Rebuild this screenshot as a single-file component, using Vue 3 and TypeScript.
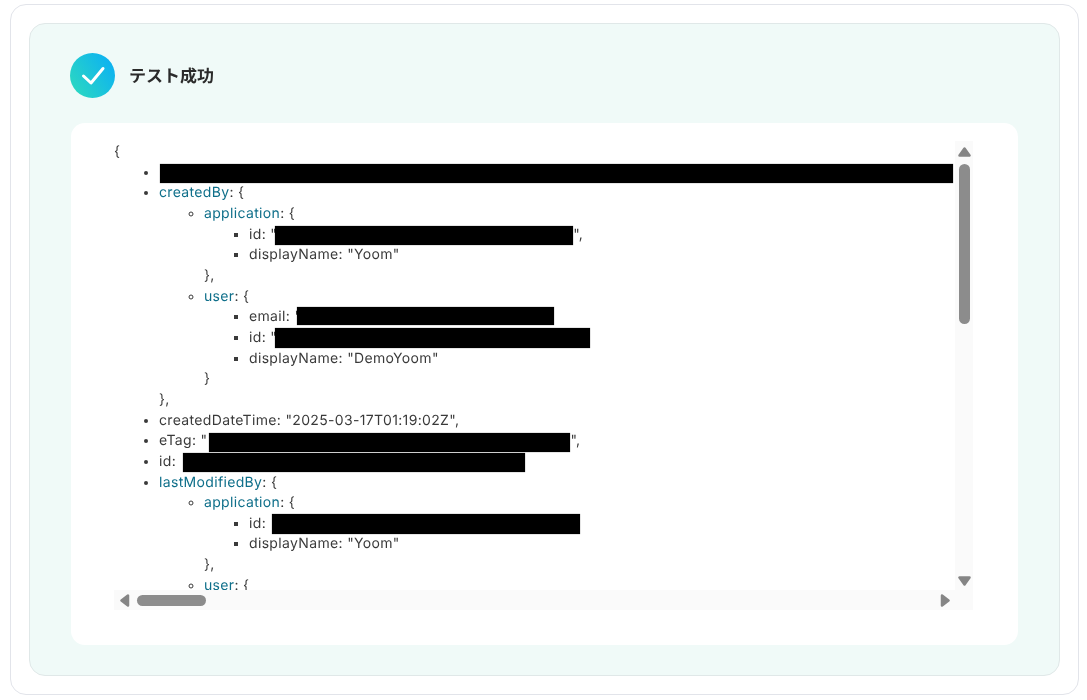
<script setup lang="ts">
const title = 'テスト成功'
</script>

<template>
  <div class="page">
    <section class="card">
      <div class="panel">
        <header class="head">
          <svg class="badge" viewBox="0 0 45 45" width="45" height="45" aria-hidden="true">
            <defs>
              <linearGradient id="g" x1="0" y1="1" x2="1" y2="0.35">
                <stop offset="0" stop-color="#2fdcbc" />
                <stop offset="1" stop-color="#0eb3f0" />
              </linearGradient>
            </defs>
            <circle cx="22.5" cy="22.5" r="22.5" fill="url(#g)" />
            <path d="M13.5 23 L21 30 L33 15.5" fill="none" stroke="#fff" stroke-width="3" stroke-linecap="round" stroke-linejoin="round" />
          </svg>
          <h2 class="title">{{ title }}</h2>
        </header>
        <div class="result">
          <div class="scroller">
            <div class="viewport">
              <div class="json">
                <div>{</div>
                <ul class="l1">
                  <li><span class="red w-top"></span></li>
                  <li><span class="key">createdBy</span>: {
                    <ul class="l2">
                      <li><span class="key">application</span>: {
                        <ul class="l3">
                          <li>id: "<span class="red w-a"></span>",</li>
                          <li>displayName: "Yoom"</li>
                        </ul>
                        },
                      </li>
                      <li><span class="key">user</span>: {
                        <ul class="l3">
                          <li>email: "<span class="red w-b"></span></li>
                          <li>id: "<span class="red w-c"></span></li>
                          <li>displayName: "DemoYoom"</li>
                        </ul>
                        }
                      </li>
                    </ul>
                    },
                  </li>
                  <li>createdDateTime: "2025-03-17T01:19:02Z",</li>
                  <li>eTag: "<span class="red w-d"></span>",</li>
                  <li>id: <span class="red w-e"></span></li>
                  <li><span class="key">lastModifiedBy</span>: {
                    <ul class="l2">
                      <li><span class="key">application</span>: {
                        <ul class="l3">
                          <li>id: <span class="red w-f"></span></li>
                          <li>displayName: "Yoom"</li>
                        </ul>
                        },
                      </li>
                      <li><span class="key">user</span>: {</li>
                    </ul>
                  </li>
                </ul>
              </div>
            </div>
            <div class="vbar">
              <svg class="arrow up" viewBox="0 0 13 10" width="13" height="10" aria-hidden="true"><path d="M6.5 1.5 L11.5 8.5 H1.5 Z" /></svg>
              <span class="vthumb"></span>
              <svg class="arrow down" viewBox="0 0 13 10" width="13" height="10" aria-hidden="true"><path d="M1.5 1.5 H11.5 L6.5 8.5 Z" /></svg>
            </div>
            <div class="hbar">
              <svg class="arrow left" viewBox="0 0 10 13" width="10" height="13" aria-hidden="true"><path d="M1.5 6.5 L8 1.5 V11.5 Z" /></svg>
              <span class="hthumb"></span>
              <svg class="arrow right" viewBox="0 0 10 13" width="10" height="13" aria-hidden="true"><path d="M2 1.5 L8.5 6.5 L2 11.5 Z" /></svg>
            </div>
          </div>
        </div>
      </div>
    </section>
  </div>
</template>

<style>
html, body { margin: 0; background: #fff; }
</style>

<style scoped>
.page {
  box-sizing: border-box;
  height: 700px;
  padding: 4px 8px 5px 10px;
  font-family: Inter, "Noto Sans CJK JP", sans-serif;
  text-rendering: geometricPrecision;
}
.card {
  box-sizing: border-box;
  height: 100%;
  padding: 18px;
  border: 1px solid #e2e4ea;
  border-radius: 16px;
  background: #fff;
}
.panel {
  box-sizing: border-box;
  height: 100%;
  padding: 29px 41px 30px 41px;
  display: flex;
  flex-direction: column;
  border: 1px solid #e0e8e8;
  border-radius: 16px;
  background: #f0faf8;
}
.head {
  display: flex;
  align-items: center;
  gap: 14px;
  height: 45px;
  margin-left: -1px;
  margin-bottom: 25px;
}
.badge { flex: none; }
.title {
  margin: -3px 0 0;
  font-size: 17px;
  font-weight: 600;
  color: #2b2b2b;
  font-family: "Noto Sans CJK JP", sans-serif;
  will-change: transform;
}
.result {
  flex: 1;
  min-height: 0;
  padding: 18px 45px 35px 43px;
  border-radius: 14px;
  background: #fff;
}
.scroller {
  display: grid;
  grid-template-columns: 1fr 18px;
  grid-template-rows: 1fr 20px;
  height: 100%;
}
.viewport {
  min-width: 0;
  min-height: 0;
  overflow: hidden;
}
.json {
  width: 841px;
  padding-top: 1px;
  font-size: 14px;
  line-height: 20.65px;
  letter-spacing: 0.34px;
  color: #3a3a3a;
  will-change: transform;
}
ul { margin: 0; padding-left: 45px; }
.l1 { list-style: disc; }
.l2 { list-style: circle; }
.l3 { list-style: square; }
li { white-space: nowrap; }
.key { color: #0f6f8a; }
.red {
  display: inline-block;
  height: 19px;
  margin-top: 1.5px;
  vertical-align: top;
  background: #000;
  box-shadow: 0 0 1px rgba(0, 0, 0, 0.6);
}
.w-top { width: 793px; margin-left: 1px; }
.w-a { width: 298px; margin-left: -2px; }
.w-b { width: 257px; height: 18px; margin-top: -0.5px; margin-left: -4px; }
.w-c { width: 315px; height: 20px; margin-top: 0; margin-left: -2px; }
.w-d { width: 361px; margin-left: 2px; }
.w-e { width: 342px; margin-left: 2.5px; }
.w-f { width: 308px; height: 20px; margin-top: 0; margin-left: 2px; }
.vbar {
  position: relative;
  grid-column: 2;
  grid-row: 1;
  background: #fafafa;
}
.hbar {
  position: relative;
  grid-column: 1 / 3;
  grid-row: 2;
  background: #fafafa;
}
.vthumb {
  position: absolute;
  left: 4px;
  top: 23px;
  width: 11px;
  height: 160px;
  border-radius: 6px;
  background: #8c8c8c;
}
.hthumb {
  position: absolute;
  left: 23px;
  top: 5px;
  width: 69px;
  height: 11px;
  border-radius: 6px;
  background: #8c8c8c;
}
.arrow {
  position: absolute;
  fill: #858585;
  stroke: #858585;
  stroke-width: 2.5;
  stroke-linejoin: round;
}
.up { left: 3px; top: 6px; }
.down { left: 3px; bottom: 4px; }
.left { left: 5.5px; top: 4px; }
.right { left: 825.5px; top: 4px; }
</style>
